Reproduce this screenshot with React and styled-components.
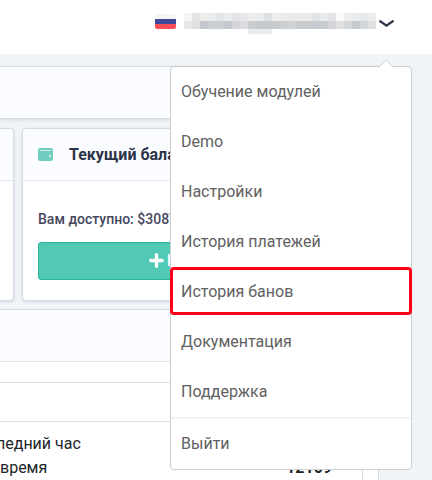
import React from "react";
import styled, { createGlobalStyle } from "styled-components";

const GlobalStyle = createGlobalStyle`
  * { box-sizing: border-box; }
  body { margin: 0; background: #f0f4f7; font-family: Roboto, "Liberation Sans", sans-serif; overflow: hidden; }
`;

const Page = styled.div`
  position: relative;
  width: 432px;
  height: 480px;
  overflow: hidden;
`;

const Header = styled.header`
  display: flex;
  align-items: flex-start;
  height: 54px;
  padding: 13px 0 0 155px;
  background: #fff;
`;

const Flag = styled.div`
  width: 21px;
  height: 15px;
  margin: 1px 8px 0 0;
  border-radius: 2px;
  background: linear-gradient(#f5f5f5 0 5px, #41479b 5px 10px, #ff4b55 10px);
`;

const HiddenName = styled.div`
  display: grid;
  grid-template-columns: repeat(24, 8px);
  grid-template-rows: 8px 8px 5px;
`;

const Cell = styled.span`
  background: ${(p) => p.$tone};
`;

const Chevron = styled.svg`
  width: 16px;
  height: 8px;
  margin: 6px 0 0 2px;
`;

const Content = styled.main`
  display: flex;
  flex-direction: column;
  gap: 9px;
  width: 379px;
  padding-top: 12px;
`;

const Strip = styled.section`
  height: 53px;
  background: #fbfcff;
  border: solid #d6dce0;
  border-width: 1px 1px 1px 0;
  box-shadow: 0 1px 3px rgba(60, 80, 90, 0.18);
`;

const Cards = styled.div`
  display: flex;
  gap: 8px;
  height: 173px;
  margin-bottom: -1px;
`;

const Card = styled.section`
  flex: ${(p) => (p.$edge ? "0 0 14px" : "1")};
  overflow: hidden;
  background: #fff;
  border: 1px solid #d6dce2;
  border-left-width: ${(p) => (p.$edge ? 0 : "1px")};
  border-radius: ${(p) => (p.$edge ? "0 4px 4px 0" : "4px")};
  box-shadow: 0 1px 3px rgba(60, 80, 90, 0.18);
`;

const CardHead = styled.div`
  display: flex;
  align-items: center;
  height: 52px;
  padding-left: ${(p) => (p.$edge ? 0 : "15px")};
  background: #fbfcff;
  border-bottom: 1px solid #e3e8ec;
`;

const Wallet = styled.svg`
  width: 15px;
  height: 13px;
  margin-right: 16px;
`;

const Title = styled.h2`
  margin: 0;
  color: #2b3347;
  font-size: 16px;
  font-weight: 700;
  line-height: 24px;
  white-space: nowrap;
`;

const CardBody = styled.div`
  padding: 27px 15px 0;
`;

const Balance = styled.p`
  margin: 0 0 12px;
  color: #45485d;
  font-size: 14px;
  font-weight: 500;
  line-height: 22px;
`;

const TopUp = styled.button`
  display: flex;
  align-items: center;
  gap: 3px;
  width: 100%;
  height: 38px;
  padding: 0 0 2px 110px;
  background: #52c9b5;
  border: 1px solid #29b397;
  border-radius: 3px;
  color: #fff;
  font: 700 16px Roboto, sans-serif;
`;

const Plus = styled.svg`
  flex: none;
  width: 15px;
  height: 15px;
`;

const Report = styled.section`
  height: 190px;
  background: #fff;
  border: solid #d6dce0;
  border-width: 1px 1px 0 0;
`;

const ReportHead = styled.div`
  height: 52px;
  background: #fbfcff;
  border-bottom: 1px solid #e0e5e9;
`;

const Table = styled.div`
  width: 363px;
  height: 110px;
  margin-top: 20px;
  border: solid #d8dee6;
  border-width: 1px 1px 0 0;
`;

const TableHead = styled.div`
  height: 39px;
  border-bottom: 1px solid #dadde2;
`;

const Row = styled.div`
  display: flex;
  justify-content: space-between;
  padding-right: 30px;
  color: #212529;
  font-size: 16px;
  line-height: 24px;
  margin-top: ${(p) => (p.$first ? "10px" : 0)};
`;

const Period = styled.span`
  margin-left: ${(p) => (p.$shift ? `-${p.$shift}px` : 0)};
`;

const Amount = styled.b`
  font-weight: 700;
`;

const Menu = styled.nav`
  position: absolute;
  left: 170px;
  top: 66px;
  width: 242px;
  height: 404px;
  background: #fff;
  border: 1px solid #cccfd2;
  border-radius: 4px;
`;

const Pointer = styled.svg`
  position: absolute;
  left: 207px;
  top: -8px;
  width: 16px;
  height: 9px;
`;

const Item = styled.a`
  display: flex;
  align-items: center;
  height: 50px;
  padding-left: 10px;
  color: #616161;
  font-size: 16px;
  line-height: 24px;
`;

const Divider = styled.div`
  height: 2px;
  background: #f2f2f2;
`;

const Highlight = styled.div`
  position: absolute;
  left: -1px;
  top: 200px;
  width: 242px;
  height: 48px;
  border: 3px solid #ff0019;
  border-radius: 4px;
`;

const upper = [
  "#f4f5f5", "#e4e5e6", "#ededee", "#ebeced", "#e4e5e6", "#ebeced", "#e2e3e4", "#e6e7e8", "#ededee", "#ebeced", "#dfe0e1", "#ededee",
  "#ececed", "#eaeaeb", "#eaeaeb", "#ebebec", "#e1e2e3", "#eaebec", "#e2e3e4", "#f9f9f9", "#ededee", "#ebeced", "#e7e8e9", "#ededee",
];
const middle = [
  "#e6e7e8", "#dfe0e1", "#c5c8cc", "#cccfd1", "#cccfd1", "#c5c8cc", "#d5d5d9", "#dadadf", "#caced0", "#c8cbce", "#c8cbce", "#c8cbce",
  "#cbcfd1", "#cfd2d4", "#c9ccce", "#cacdd0", "#c7cace", "#c8cccf", "#d3d3d8", "#dfdfe1", "#d4d8db", "#c6cacd", "#d4d7da", "#dfe0e2",
];
const lower = Array.from({ length: 24 }, (_, i) => (i >= 8 && i <= 10 ? "#ebebed" : "transparent"));
const cells = [...upper, ...middle, ...lower];

const items = ["Обучение модулей", "Demo", "Настройки", "История платежей", "История банов", "Документация", "Поддержка"];

export default function App() {
  return (
    <Page>
      <GlobalStyle />
      <Header>
        <Flag />
        <HiddenName>
          {cells.map((tone, i) => <Cell key={i} $tone={tone} />)}
        </HiddenName>
        <Chevron viewBox="0 0 16 8">
          <path d="M1.5 1.8 L8.5 6.6 L15.5 1.8" fill="none" stroke="#2b3347" strokeWidth="2.3" />
        </Chevron>
      </Header>
      <Content>
        <Strip />
        <Cards>
          <Card $edge><CardHead $edge /></Card>
          <Card>
            <CardHead>
              <Wallet viewBox="0 0 15 13">
                <rect width="15" height="13" rx="2" fill="#70cec1" />
                <path d="M2.5 2.5h11" stroke="#d5efe8" />
                <circle cx="12" cy="8" r="1" fill="#eef7ef" />
              </Wallet>
              <Title>Текущий баланс</Title>
            </CardHead>
            <CardBody>
              <Balance>Вам доступно: $3087</Balance>
              <TopUp>
                <Plus viewBox="0 0 15 15">
                  <path d="M7.5 1.8v11.4M1.8 7.5h11.4" stroke="#fff" strokeWidth="3.4" strokeLinecap="round" />
                </Plus>
                Пополнить
              </TopUp>
            </CardBody>
          </Card>
        </Cards>
        <Report>
          <ReportHead />
          <Table>
            <TableHead />
            <Row $first><Period $shift={4}>ледний час</Period></Row>
            <Row><Period>время</Period><Amount>12109</Amount></Row>
          </Table>
        </Report>
      </Content>
      <Menu>
        <Pointer viewBox="0 0 16 9">
          <path d="M0.5 8.5 L8 1 L15.5 8.5 V9 H0.5z" fill="#fff" />
          <path d="M0.5 8.5 L8 1 L15.5 8.5" fill="none" stroke="#cccfd2" />
        </Pointer>
        {items.map((label) => <Item key={label}>{label}</Item>)}
        <Divider />
        <Item>Выйти</Item>
        <Highlight />
      </Menu>
    </Page>
  );
}
